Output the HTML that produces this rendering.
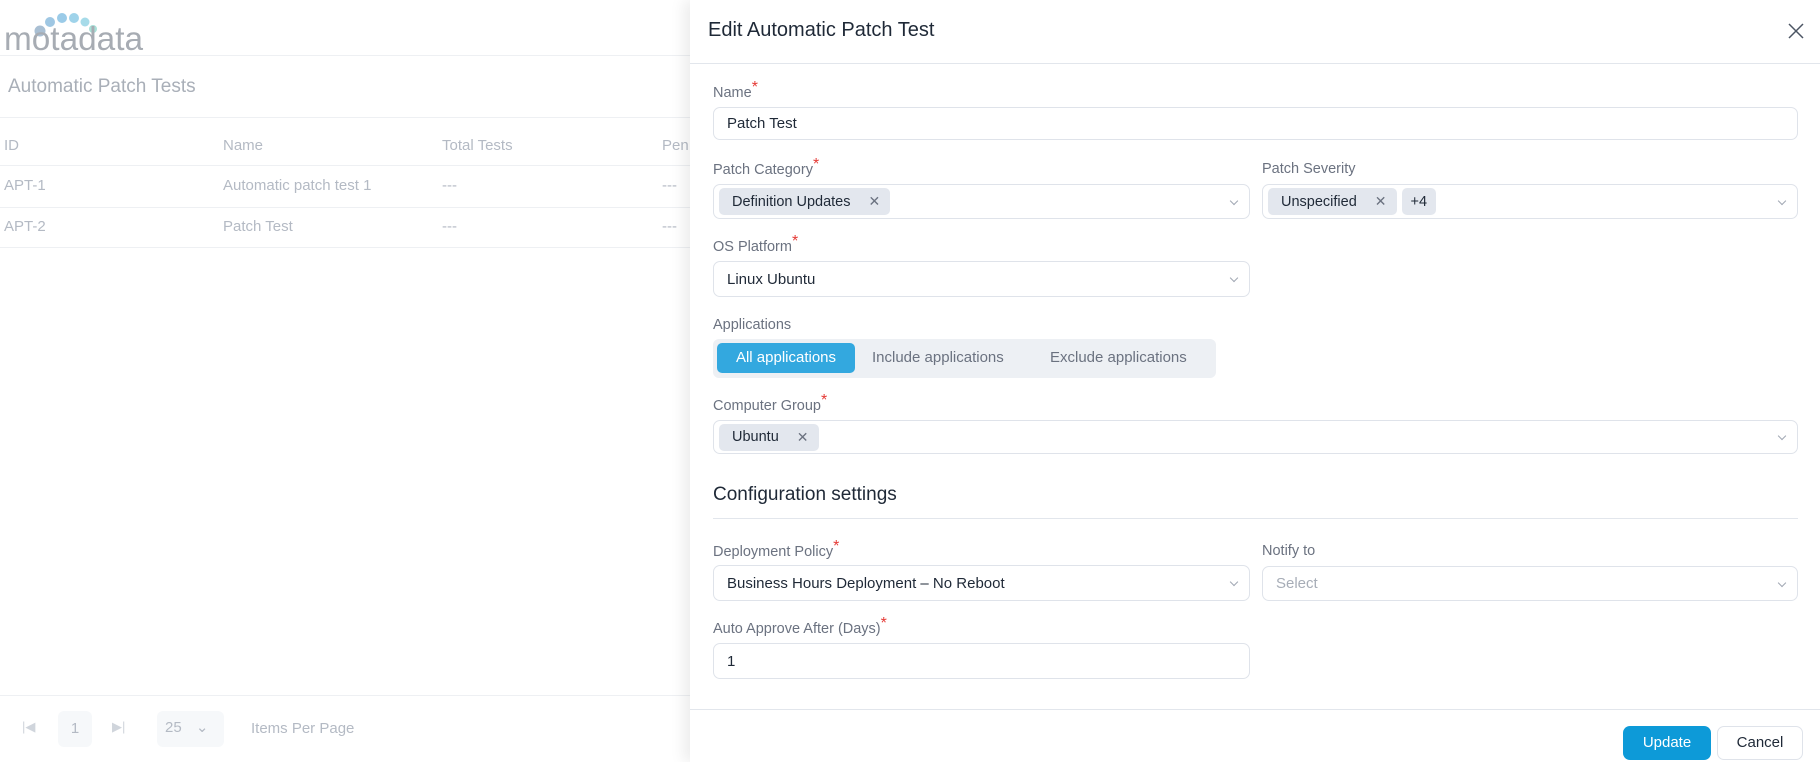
<!DOCTYPE html>
<html><head><meta charset="utf-8"><style>
*{box-sizing:border-box;margin:0;padding:0}
body{width:1820px;height:762px;overflow:hidden;background:#fff;font-family:"Liberation Sans",sans-serif;position:relative;color:#364152}
.a{position:absolute}
.lt{color:#b4bac4;font-size:15px}
.line{position:absolute;height:1px;background:#eef0f3}
.panel{position:absolute;left:690px;top:0;width:1130px;height:762px;background:#fff;box-shadow:-6px 0 14px rgba(0,0,0,.08)}
.lbl{position:absolute;font-size:14.5px;color:#6b7280}
.lbl i{color:#e53935;font-style:normal;position:relative;top:-5px;font-size:16px}
.inp{position:absolute;border:1px solid #dfe3ea;border-radius:7px;background:#fff;font-size:15px;color:#1f2937;display:flex;align-items:center;padding-left:13px}
.car{position:absolute;right:12px;top:50%;margin-top:-4px;width:6px;height:6px;border-right:1px solid #a0a7b3;border-bottom:1px solid #a0a7b3;transform:rotate(45deg)}
.tag{background:#e3e7ee;border-radius:5px;height:27px;display:inline-flex;align-items:center;padding:0 10px 0 13px;font-size:14.5px;color:#1f2937;margin-right:5px}
.tag b{font-weight:normal;color:#6b7280;margin-left:18px;font-size:14px}
</style></head><body>
<div class="a" style="left:4px;top:6px;width:150px;height:48px">
<svg width="150" height="48">
<circle cx="36" cy="25" r="5.5" fill="#a9bfd3"/><circle cx="46" cy="16" r="5" fill="#9fc7e3"/><circle cx="58" cy="12" r="5" fill="#9bcbe8"/><circle cx="70" cy="12" r="5" fill="#9fd3ea"/><circle cx="81" cy="16" r="4.5" fill="#a6dbe9"/><circle cx="89" cy="23" r="4" fill="#a8e0d8"/>
<text x="0" y="44" font-family="Liberation Sans" font-size="33" fill="#a7acb3" textLength="139" lengthAdjust="spacingAndGlyphs">motadata</text></svg></div>
<div class="line" style="left:0;top:55px;width:690px"></div>
<div class="a" style="left:8px;top:76px;font-size:19px;color:#a9afb8">Automatic Patch Tests</div>
<div class="line" style="left:0;top:117px;width:690px"></div>
<div class="a lt" style="left:4px;top:137px">ID</div><div class="a lt" style="left:223px;top:137px">Name</div><div class="a lt" style="left:442px;top:137px">Total Tests</div><div class="a lt" style="left:662px;top:137px">Pen</div>
<div class="line" style="left:0;top:165px;width:690px"></div>
<div class="a lt" style="left:4px;top:177px">APT-1</div><div class="a lt" style="left:223px;top:177px">Automatic patch test 1</div><div class="a lt" style="left:442px;top:177px">---</div><div class="a lt" style="left:662px;top:177px">---</div>
<div class="line" style="left:0;top:207px;width:690px"></div>
<div class="a lt" style="left:4px;top:218px">APT-2</div><div class="a lt" style="left:223px;top:218px">Patch Test</div><div class="a lt" style="left:442px;top:218px">---</div><div class="a lt" style="left:662px;top:218px">---</div>
<div class="line" style="left:0;top:247px;width:690px"></div>
<div class="line" style="left:0;top:695px;width:690px"></div>
<div class="a lt" style="left:22px;top:719px;font-size:13px;color:#d0d5dc">|◀</div>
<div class="a" style="left:58px;top:711px;width:34px;height:36px;background:#f6f8fa;border-radius:6px;color:#b4bac4;font-size:15px;text-align:center;line-height:36px">1</div>
<div class="a lt" style="left:112px;top:719px;font-size:13px;color:#d0d5dc">▶|</div>
<div class="a" style="left:157px;top:711px;width:67px;height:36px;background:#f6f8fa;border-radius:6px;color:#b4bac4;font-size:15px;line-height:34px;padding-left:8px">25 <span style="margin-left:10px">⌄</span></div>
<div class="a lt" style="left:251px;top:720px">Items Per Page</div>

<div class="panel">
<div class="a" style="left:18px;top:19px;font-size:20px;color:#1f2937">Edit Automatic Patch Test</div>
<svg class="a" style="left:1098px;top:23px" width="16" height="16"><path d="M1 1L15 15M15 1L1 15" stroke="#4b5563" stroke-width="1.5"/></svg>
<div class="line" style="left:0;top:63px;width:1130px;background:#e2e6ec"></div>

<div class="lbl" style="left:23px;top:84px">Name<i>*</i></div>
<div class="inp" style="left:23px;top:107px;width:1085px;height:33px">Patch Test</div>

<div class="lbl" style="left:23px;top:161px">Patch Category<i>*</i></div>
<div class="inp" style="left:23px;top:184px;width:537px;height:35px;padding-left:5px"><span class="tag">Definition Updates<b>✕</b></span><div class="car"></div></div>
<div class="lbl" style="left:572px;top:161px">Patch Severity</div>
<div class="inp" style="left:572px;top:184px;width:536px;height:35px;padding-left:5px"><span class="tag">Unspecified<b>✕</b></span><span class="tag" style="padding:0 9px">+4</span><div class="car"></div></div>

<div class="lbl" style="left:23px;top:238px">OS Platform<i>*</i></div>
<div class="inp" style="left:23px;top:261px;width:537px;height:36px">Linux Ubuntu<div class="car"></div></div>

<div class="lbl" style="left:23px;top:317px">Applications</div>
<div class="a" style="left:23px;top:339px;width:503px;height:39px;background:#edf0f4;border-radius:6px"></div>
<div class="a" style="left:27px;top:343px;width:138px;height:30px;background:#33a8df;border-radius:5px;color:#fff;font-size:15px;text-align:center;line-height:30px">All applications</div>
<div class="a" style="left:182px;top:349px;font-size:15px;color:#6b7280">Include applications</div>
<div class="a" style="left:360px;top:349px;font-size:15px;color:#6b7280">Exclude applications</div>

<div class="lbl" style="left:23px;top:397px">Computer Group<i>*</i></div>
<div class="inp" style="left:23px;top:420px;width:1085px;height:34px;padding-left:5px"><span class="tag">Ubuntu<b>✕</b></span><div class="car"></div></div>

<div class="a" style="left:23px;top:484px;font-size:19px;color:#1f2937">Configuration settings</div>
<div class="line" style="left:23px;top:518px;width:1085px;background:#e2e6ec"></div>

<div class="lbl" style="left:23px;top:543px">Deployment Policy<i>*</i></div>
<div class="inp" style="left:23px;top:565px;width:537px;height:36px">Business Hours Deployment – No Reboot<div class="car"></div></div>
<div class="lbl" style="left:572px;top:543px">Notify to</div>
<div class="inp" style="left:572px;top:566px;width:536px;height:35px;color:#a7adb7">Select<div class="car"></div></div>

<div class="lbl" style="left:23px;top:620px">Auto Approve After (Days)<i>*</i></div>
<div class="inp" style="left:23px;top:643px;width:537px;height:36px">1</div>

<div class="line" style="left:0;top:709px;width:1130px;background:#e2e6ec"></div>
<div class="a" style="left:933px;top:726px;width:88px;height:34px;background:#0d9ad8;border-radius:7px;color:#fff;font-size:15px;text-align:center;line-height:34px">Update</div>
<div class="a" style="left:1027px;top:726px;width:86px;height:34px;border:1px solid #dfe3ea;border-radius:7px;color:#1f2937;font-size:15px;text-align:center;line-height:32px">Cancel</div>
</div>
</body></html>
